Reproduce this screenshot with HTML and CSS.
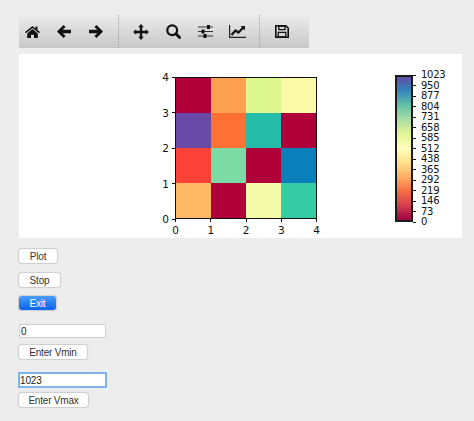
FILE: index.html
```html
<!DOCTYPE html>
<html lang="en">

<head>
    <meta charset="UTF-8">
    <title>Heatmap</title>
    <link rel="stylesheet" href="styles.css">
</head>

<body>
    <div class="toolbar">
        <div class="tool-group first">
            <button class="tool"><svg width="15" height="12" viewBox="0 0 15 12"><path d="M7.5 0 L0 6 L1 7.2 L7.5 2 L14 7.2 L15 6 L12.5 4 V0.5 H10.5 V2.4 Z M2.2 7.4 L7.5 3 L12.8 7.4 V12 H9 V8.8 H6 V12 H2.2 Z" fill="#111"/></svg></button>
            <button class="tool"><svg width="14" height="13" viewBox="0 0 14 13"><path d="M6.5 0 L0 6.5 L6.5 13 L8.6 10.9 L5.7 8.2 H14 V4.8 H5.7 L8.6 2.1 Z" fill="#111"/></svg></button>
            <button class="tool"><svg width="14" height="13" viewBox="0 0 14 13"><path d="M7.5 0 L14 6.5 L7.5 13 L5.4 10.9 L8.3 8.2 H0 V4.8 H8.3 L5.4 2.1 Z" fill="#111"/></svg></button>
        </div>
        <div class="tool-group">
            <button class="tool"><svg width="16" height="16" viewBox="0 0 16 16"><path d="M8 0 L10.8 3.2 H9.2 V6.8 H12.8 V5.2 L16 8 L12.8 10.8 V9.2 H9.2 V12.8 H10.8 L8 16 L5.2 12.8 H6.8 V9.2 H3.2 V10.8 L0 8 L3.2 5.2 V6.8 H6.8 V3.2 H5.2 Z" fill="#111"/></svg></button>
            <button class="tool"><svg width="15" height="15" viewBox="0 0 15 15"><circle cx="6.2" cy="6.2" r="4.9" fill="none" stroke="#111" stroke-width="2.2"/><path d="M9.8 9.8 L13.6 13.6" stroke="#111" stroke-width="2.8" stroke-linecap="round"/></svg></button>
            <button class="tool"><svg width="15" height="13" viewBox="0 0 15 13"><path d="M0 2 H15 M0 6.5 H15 M0 11 H15" stroke="#333" stroke-width="1.2"/><rect x="9" y="0" width="3" height="4" fill="#111"/><rect x="3.5" y="4.5" width="3" height="4" fill="#111"/><rect x="5.5" y="9" width="3" height="4" fill="#111"/></svg></button>
            <button class="tool"><svg width="17" height="13" viewBox="0 0 17 13"><path d="M0.6 0 V12.4 H17" fill="none" stroke="#222" stroke-width="1.2"/><path d="M2.5 10 L6.5 5.5 L9.5 7.5 L14 2.8" fill="none" stroke="#111" stroke-width="2.2"/><path d="M11.5 1 H16 V5.5 Z" fill="#111"/></svg></button>
        </div>
        <div class="tool-group">
            <button class="tool"><svg width="14" height="13" viewBox="0 0 14 13"><path d="M0.8 0.8 H10.8 L13.2 3 V12.2 H0.8 Z" fill="none" stroke="#111" stroke-width="1.6"/><path d="M3.8 1 H10 V4.6 H3.8 Z" fill="none" stroke="#111" stroke-width="1.3"/><path d="M3.2 7.4 H10.8 V12 H3.2 Z" fill="none" stroke="#111" stroke-width="1.3"/></svg></button>
        </div>
    </div>

    <div class="canvas">
        <div class="axes-wrap">
            <div class="y-ticks">
                <span>4</span><span>3</span><span>2</span><span>1</span><span>0</span>
            </div>
            <div class="axes-col">
                <div class="axes">
                    <div style="background:#b00039"></div>
                    <div style="background:#fda04f"></div>
                    <div style="background:#dcf78e"></div>
                    <div style="background:#fbf8a8"></div>
                    <div style="background:#6a4aa8"></div>
                    <div style="background:#fd7134"></div>
                    <div style="background:#25bda9"></div>
                    <div style="background:#b00039"></div>
                    <div style="background:#fb4138"></div>
                    <div style="background:#7cdba4"></div>
                    <div style="background:#b00039"></div>
                    <div style="background:#0a80ba"></div>
                    <div style="background:#feb763"></div>
                    <div style="background:#b00039"></div>
                    <div style="background:#f3fba9"></div>
                    <div style="background:#35cba5"></div>
                </div>
                <div class="x-ticks">
                    <span>0</span><span>1</span><span>2</span><span>3</span><span>4</span>
                </div>
            </div>
        </div>
        <div class="colorbar-wrap">
            <div class="colorbar"></div>
            <div class="cb-ticks">
                <span>1023</span><span>950</span><span>877</span><span>804</span><span>731</span>
                <span>658</span><span>585</span><span>512</span><span>438</span><span>365</span>
                <span>292</span><span>219</span><span>146</span><span>73</span><span>0</span>
            </div>
        </div>
    </div>

    <div class="controls">
        <button class="btn plot">Plot</button>
        <button class="btn stop">Stop</button>
        <button class="btn exit">Exit</button>
        <input class="entry" type="text" value="0">
        <button class="btn vmin">Enter Vmin</button>
        <input class="entry focused" type="text" value="1023">
        <button class="btn vmax">Enter Vmax</button>
    </div>
</body>

</html>
```

FILE: styles.css
```css
* {
    margin: 0;
    padding: 0;
    box-sizing: border-box;
}

body {
    width: 474px;
    height: 421px;
    overflow: hidden;
    background-color: #ededed;
    font-family: "Liberation Sans", Arial, sans-serif;
    padding: 15px 0 0 19px;
}

.toolbar {
    display: flex;
    gap: 0;
    width: 290px;
    height: 33px;
    background: linear-gradient(#ebebeb, #c8c8c8);
}

.tool-group {
    display: flex;
    align-items: center;
    gap: 6px;
    padding: 0 9px;
    border-left: 1px dotted #a0a0a0;
}

.tool-group.first {
    border-left: none;
    padding-left: 0;
}

.tool {
    display: flex;
    align-items: center;
    justify-content: center;
    width: 26px;
    height: 33px;
    background: none;
    border: none;
}

.canvas {
    display: flex;
    width: 443px;
    height: 184px;
    margin-top: 6px;
    background: #fff;
    font-family: "DejaVu Sans", sans-serif;
    color: #111;
}

.axes-wrap {
    display: flex;
    margin: 23px 0 0 140px;
    font-size: 10.5px;
}

.y-ticks {
    display: flex;
    flex-direction: column;
    justify-content: space-between;
    width: 16px;
    height: 154px;
    margin-top: -6px;
    line-height: 12px;
}

.y-ticks span {
    display: flex;
    justify-content: flex-end;
    align-items: center;
    gap: 3px;
}

.y-ticks span::after {
    content: "";
    width: 3px;
    height: 1px;
    background: #111;
}

.axes-col {
    width: 142px;
}

.axes {
    display: grid;
    grid-template-columns: repeat(4, 1fr);
    grid-template-rows: repeat(4, 1fr);
    width: 142px;
    height: 142px;
    border: 1px solid #111;
}

.x-ticks {
    display: flex;
    justify-content: space-between;
    margin: 0 -4px;
    line-height: 12px;
}

.x-ticks span {
    display: flex;
    flex-direction: column;
    align-items: center;
    width: 9px;
}

.x-ticks span::before {
    content: "";
    width: 1px;
    height: 3px;
    margin-bottom: 2px;
    background: #111;
}

.colorbar-wrap {
    display: flex;
    margin: 21px 0 0 78px;
    font-size: 10px;
    letter-spacing: -0.25px;
}

.colorbar {
    width: 18px;
    height: 147px;
    border: 2px solid #1a1a1a;
    background: linear-gradient(#5e4fa2, #3288bd 10%, #66c2a5 20%, #abdda4 30%, #e6f598 40%, #ffffbf 50%, #fee08b 60%, #fdae61 70%, #f46d43 80%, #d53e4f 90%, #9e0142);
}

.cb-ticks {
    display: flex;
    flex-direction: column;
    justify-content: space-between;
    height: 157px;
    margin-top: -5px;
    line-height: 10px;
}

.cb-ticks span {
    display: flex;
    align-items: center;
    gap: 5px;
}

.cb-ticks span::before {
    content: "";
    width: 3px;
    height: 1px;
    background: #111;
}

.controls {
    display: flex;
    flex-direction: column;
    align-items: flex-start;
}

.btn {
    height: 14px;
    background: #fff;
    border: none;
    border-radius: 3px;
    box-shadow: 0 0 1px 1px rgba(0, 0, 0, 0.14);
    font-family: "Liberation Sans", Arial, sans-serif;
    font-size: 10px;
    letter-spacing: -0.2px;
    color: #333;
}

.plot { width: 38px; margin-top: 11px; }
.stop { width: 41px; margin-top: 10px; }
.exit {
    width: 37px;
    margin-top: 9px;
    background: linear-gradient(#4a9dfb, #0b62ee);
    color: #fff;
}
.vmin { width: 68px; margin-top: 7px; }
.vmax { width: 69px; margin-top: 7px; }

.entry {
    width: 87px;
    height: 14px;
    margin-top: 14px;
    padding-left: 1px;
    background: #fff;
    border: 1px solid #d0d0d0;
    font-family: "Liberation Sans", Arial, sans-serif;
    font-size: 10px;
    letter-spacing: -0.15px;
    color: #222;
}

.entry.focused {
    width: 85px;
    height: 12px;
    margin: 15px 0 0 1px;
    padding-left: 0;
    outline: 2px solid #80b4ec;
    border: none;
}
```
